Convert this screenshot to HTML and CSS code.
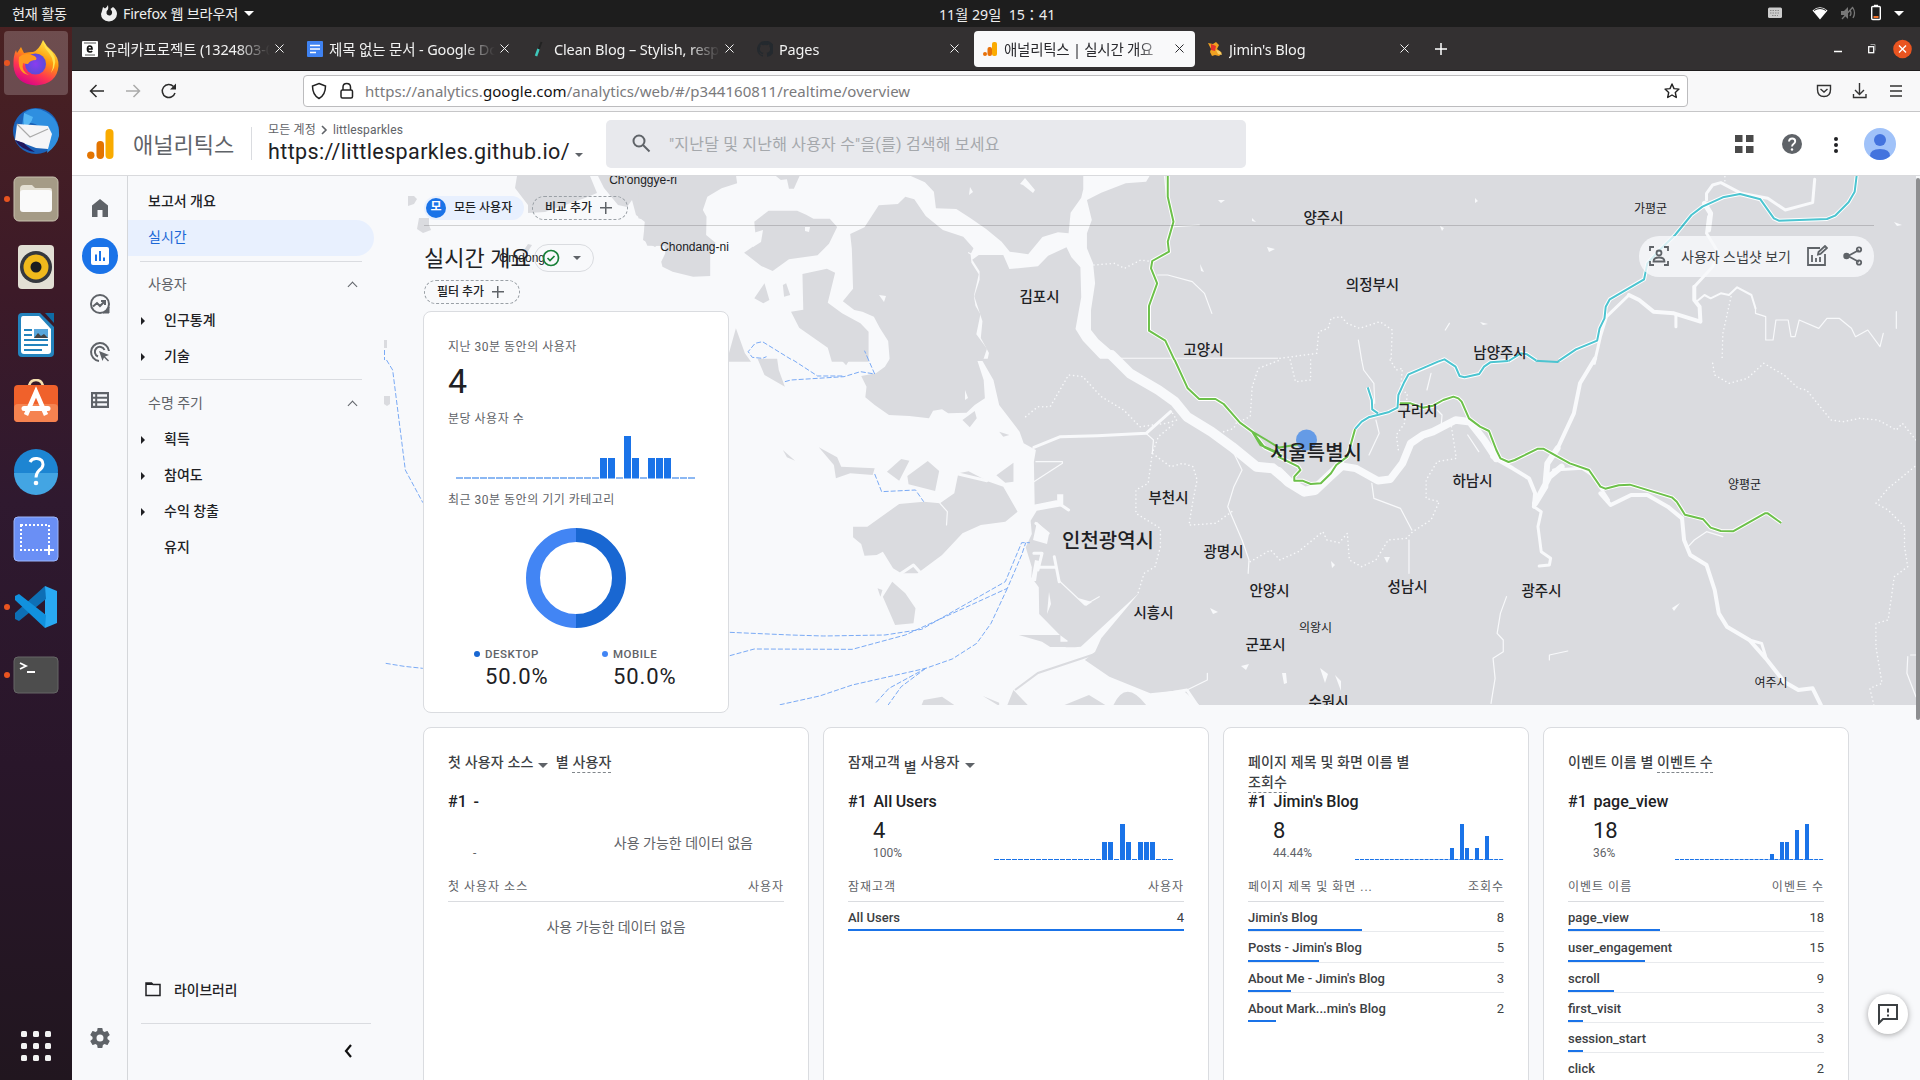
FILE: index.html
```html
<!DOCTYPE html>
<html lang="ko">
<head>
<meta charset="utf-8">
<title>애널리틱스 | 실시간 개요</title>
<link rel="stylesheet" href="styles.css">
</head>
<body>
<div class="topbar">
  <span class="tb-act">현재 활동</span>
  <svg class="tb-fx" width="16" height="18" viewBox="0 0 16 18"><path d="M1 7l1-4 2 1.500Q6 3 7 1q.5 3 0 4.500Q5 7 5.500 9.500 6.500 12 9 11.500 11.500 10.500 11 7.500L9.500 5 12 3q4 3 4 7-.5 6.500-8 7.500Q0 16.500 0 10z" fill="#eee"/></svg>
  <span>Firefox 웹 브라우저</span>
  <i class="tri white"></i>
  <span class="clock">11월 29일&nbsp; 15：41</span>
  <svg class="tb-sys" width="150" height="27" viewBox="1765 0 150 27">
    <rect x="1769" y="7.500" width="14" height="10.500" rx="1.500" fill="#ccc"/><path d="M1771 10.500h10M1771 13h10M1773 15.500h6" stroke="#888" stroke-dasharray="1.500 1"/>
    <path d="M1813.500 10.500q7.500-6.500 15 0L1821 19.500z" fill="#fff"/><path d="M1815 10.500q6-4 12 0" fill="none" stroke="#1d1d1d"/>
    <path d="M1842 11h3l4-4v12l-4-4h-3z" fill="#777"/><path d="M1851 10q2 3 0 6M1854 8q3 5 0 10M1843 19l11-12" fill="none" stroke="#777" stroke-width="1.300"/>
    <rect x="1872.700" y="6.500" width="8.600" height="13" rx="1" fill="none" stroke="#fff" stroke-width="1.400"/><path d="M1875 5.500h4" stroke="#fff" stroke-width="1.500"/><path d="M1874.500 16h5v2h-5z" fill="#f37329"/>
    <path d="M1895 11h10l-5 5z" fill="#fff"/>
  </svg>
</div>
<div class="desk">
  <aside class="dock">
    <div class="app on run"><svg width="48" height="48" viewBox="0 0 48 48"><defs><linearGradient id="ff" x1=".8" y1="0" x2=".3" y2="1"><stop offset="0" stop-color="#fff44f"/><stop offset=".4" stop-color="#ff980e"/><stop offset=".7" stop-color="#ff3750"/><stop offset="1" stop-color="#d6008b"/></linearGradient><radialGradient id="fp"><stop offset="0" stop-color="#8a3cf0"/><stop offset="1" stop-color="#5b4bd8"/></radialGradient></defs><path d="M31 1q3 6 8 10 8 7 7.500 16Q45 45 24 46.500 3 45 1.500 27 1 17 4 11l1 3 4-6 3 6q5-1 9-1 6-2 10-12z" fill="url(#ff)"/><circle cx="23.500" cy="25" r="10.500" fill="url(#fp)"/><path d="M7 18q5-5 13-2 6 2 4 5-6 0-8 4-3 0-5-1-2 8 6 12Q5 34 7 18z" fill="#ff9a1f"/><path d="M31 2q1 7 6 12 7 9 2 20 8-11 1-21Q34 8 31 2z" fill="#ffe14d"/></svg></div>
    <div class="app"><svg width="48" height="48" viewBox="0 0 48 48"><circle cx="24" cy="24" r="23" fill="#1b62b8"/><path d="M12 6Q22-2 34 5q14 8 13 24-2 10-12 17 3-14-5-24Q20 12 10 18z" fill="#2f8fe0"/><path d="M12 6q-1 7 0 14 7-2 9-10z" fill="#56b6f4"/><path d="M5 17l31 2 4 8-4 15-12-1L3 33z" fill="#f5f5f7"/><path d="M5 17l13 13 18-8" fill="none" stroke="#aaa" stroke-width="1.200"/><path d="M3 33q6 10 20 12-9-6-11-9z" fill="#20165c"/></svg></div>
    <div class="app run"><svg width="48" height="48" viewBox="0 0 48 48"><rect x="2" y="2" width="44" height="44" rx="5" fill="#a59b86" stroke="#c7c0ae"/><path d="M8 14q0-4 4-4h8l3 3h15q2 0 2 3v10H8z" fill="#e4dfd3"/><rect x="8" y="15" width="32" height="22" rx="3" fill="#fafafa"/></svg></div>
    <div class="app"><svg width="48" height="48" viewBox="0 0 48 48"><rect x="6" y="2" width="36" height="44" rx="4" fill="#e2dfd4"/><circle cx="24" cy="24" r="16" fill="#35383e"/><circle cx="24" cy="24" r="12.500" fill="#f0b91c"/><circle cx="24" cy="24" r="5.500" fill="#1c1d20"/></svg></div>
    <div class="app"><svg width="48" height="48" viewBox="0 0 48 48"><path d="M10 2h18l14 14v26q0 4-4 4H10q-4 0-4-4V6q0-4 4-4z" fill="#2383bd"/><path d="M11 5h16l12 13v22q0 3-3 3H12q-3 0-3-3V8q0-3 2-3z" fill="#fff"/><path d="M33 2h9v10z" fill="#0e6ba5"/><path d="M12 19h8M12 24h8M12 29h24M12 34h24M12 39h18" stroke="#2383bd" stroke-width="2"/><path d="M22 18h14v9H22z" fill="#59a7dc"/><path d="M22 27l4-5 3 3 3-2 4 4z" fill="#444"/></svg></div>
    <div class="app"><svg width="48" height="48" viewBox="0 0 48 48"><path d="M17 9q0-8 7-8t7 8" fill="none" stroke="#f5e1b0" stroke-width="2.500"/><rect x="2" y="6" width="44" height="37" rx="4" fill="#f0612b"/><rect x="2" y="25" width="44" height="18" rx="4" fill="#f58350"/><path d="M14 36l10-23 10 23" fill="none" stroke="#fff" stroke-width="4.500"/><path d="M12 29.500h24" stroke="#fff" stroke-width="5" stroke-linecap="round"/></svg></div>
    <div class="app"><svg width="48" height="48" viewBox="0 0 48 48"><circle cx="24" cy="24" r="22" fill="#1d85d2"/><path d="M2 26h44a22 22 0 0 1-44 0z" fill="#43a5e3"/><path d="M18 15q2-4 7-3.500 6 .5 6 6 0 3-4 6-3 3-3 7" fill="none" stroke="#fff" stroke-width="3"/><circle cx="24" cy="36" r="2.300" fill="#fff"/></svg></div>
    <div class="app"><svg width="48" height="48" viewBox="0 0 48 48"><rect x="2" y="2" width="44" height="44" rx="4" fill="#6a8ff5" stroke="#9db6fb"/><rect x="9" y="10" width="28" height="25" fill="none" stroke="#fff" stroke-width="2" stroke-dasharray="2 2"/><path d="M37 30v10M32 35h10" stroke="#fff" stroke-width="2"/></svg></div>
    <div class="app run"><svg width="48" height="48" viewBox="0 0 48 48"><path d="M33 3l12 5v32l-12 5z" fill="#29a9f2"/><path d="M33 3L3 30v6l4 2 27-22z" fill="#0e6fb5"/><path d="M33 45L3 17v-4l4-2 27 21z" fill="#1191dd"/></svg></div>
    <div class="app run"><svg width="48" height="48" viewBox="0 0 48 48"><rect x="2" y="6" width="44" height="36" rx="4" fill="#4d4d4d" stroke="#666"/><path d="M8 12l6 3-6 3M15 21h8" fill="none" stroke="#fff" stroke-width="1.800"/></svg></div>
    <svg class="grid9" width="32" height="32" viewBox="0 0 32 32" fill="#f2f2f2"><rect x="1" y="1" width="6" height="6" rx="1.500"/><rect x="13" y="1" width="6" height="6" rx="1.500"/><rect x="25" y="1" width="6" height="6" rx="1.500"/><rect x="1" y="13" width="6" height="6" rx="1.500"/><rect x="13" y="13" width="6" height="6" rx="1.500"/><rect x="25" y="13" width="6" height="6" rx="1.500"/><rect x="1" y="25" width="6" height="6" rx="1.500"/><rect x="13" y="25" width="6" height="6" rx="1.500"/><rect x="25" y="25" width="6" height="6" rx="1.500"/></svg>
  </aside>
  <div class="window">
    <div class="tabs">
      <div class="tab"><svg width="16" height="16" viewBox="0 0 16 16"><rect width="16" height="16" rx="1" fill="#fff"/><path d="M2 2h12M3 14h10" stroke="#555"/><path d="M5.500 8H10Q10 5 7.800 5 5.500 5 5.500 8t2.500 3q1.500 0 2-1" fill="none" stroke="#111" stroke-width="1.700"/></svg><span class="fade">유레카프로젝트 (1324803-0</span><svg class="x" width="9" height="9" viewBox="0 0 9 9"><path d="M.5.500l8 8M8.500.500l-8 8" stroke="currentColor"/></svg></div>
      <div class="tab"><svg width="16" height="16" viewBox="0 0 16 16"><rect width="16" height="16" rx="1" fill="#3f82f1"/><path d="M3 4.500h10M3 8h10M3 11.500h6" stroke="#fff" stroke-width="1.500"/></svg><span class="fade">제목 없는 문서 - Google Docs</span><svg class="x" width="9" height="9" viewBox="0 0 9 9"><path d="M.5.500l8 8M8.500.500l-8 8" stroke="currentColor"/></svg></div>
      <div class="tab"><svg width="16" height="16" viewBox="0 0 16 16"><path d="M9.500 1L6.500 9" stroke="#222" stroke-width="2"/><path d="M6.500 8L4 15" stroke="#3fc8bb" stroke-width="2.500"/></svg><span class="fade">Clean Blog – Stylish, respo</span><svg class="x" width="9" height="9" viewBox="0 0 9 9"><path d="M.5.500l8 8M8.500.500l-8 8" stroke="currentColor"/></svg></div>
      <div class="tab"><svg width="16" height="16" viewBox="0 0 16 16"><path fill="#24292e" d="M8 0a8 8 0 0 0-2.500 15.600c.4.100.5-.2.500-.4v-1.500C3.800 14.200 3.300 13 3.300 13c-.4-.9-.9-1.200-.9-1.200-.7-.5.100-.5.100-.5.800.1 1.200.8 1.200.8.700 1.200 1.900.9 2.300.7.100-.5.300-.9.500-1.100-1.800-.2-3.600-.9-3.600-4 0-.9.300-1.600.8-2.100 0-.2-.4-1 .1-2.100 0 0 .7-.2 2.200.8a7.600 7.600 0 0 1 4 0c1.500-1 2.200-.8 2.200-.8.500 1.100.1 1.900.1 2.100.5.500.8 1.200.8 2.100 0 3.100-1.900 3.800-3.600 4 .3.200.5.700.5 1.500v2.200c0 .2.100.5.600.4A8 8 0 0 0 8 0z"/></svg><span class="fade">Pages</span><svg class="x" width="9" height="9" viewBox="0 0 9 9"><path d="M.5.500l8 8M8.500.500l-8 8" stroke="currentColor"/></svg></div>
      <div class="tab active"><svg width="16" height="16" viewBox="0 0 16 16"><rect x="10" y="1" width="5" height="14" rx="2" fill="#fbab00"/><rect x="5.500" y="6" width="4.500" height="9" rx="2" fill="#e8710a"/><circle cx="3" cy="13" r="2" fill="#e8710a"/></svg><span class="fade">애널리틱스 | 실시간 개요</span><svg class="x" width="9" height="9" viewBox="0 0 9 9"><path d="M.5.500l8 8M8.500.500l-8 8" stroke="currentColor"/></svg></div>
      <div class="tab"><svg width="16" height="16" viewBox="0 0 16 16"><path d="M1 2l5 1 3-2 3 3-2 4 5 4-3 3-4-1-3 1-2-4 1-3z" fill="#f0a020"/><path d="M4 3l5 2-1 5-4-1z" fill="#e3342c"/><path d="M9 9l4 1 2 4-4-1z" fill="#f7cf6a"/></svg><span class="fade">Jimin's Blog</span><svg class="x" width="9" height="9" viewBox="0 0 9 9"><path d="M.5.500l8 8M8.500.500l-8 8" stroke="currentColor"/></svg></div>
      <svg class="plus" width="14" height="14" viewBox="0 0 14 14"><path d="M7 1v12M1 7h12" stroke="#fff" stroke-width="1.500"/></svg>
      <svg class="wm" width="80" height="24" viewBox="0 0 80 24"><path d="M1 14.500h8" stroke="#fff" stroke-width="1.500"/><rect x="35.700" y="9.700" width="5" height="6" fill="none" stroke="#fff" stroke-width="1.300"/><path d="M37.500 7.500h4.500v6" fill="none" stroke="#999"/><circle cx="69.500" cy="12" r="9.300" fill="#e95420"/><path d="M66 8.500l7 7M73 8.500l-7 7" stroke="#fff" stroke-width="1.400"/></svg>
    </div>
    <div class="toolbar">
      <svg class="tnav" width="90" height="20" viewBox="0 0 90 20" fill="none" stroke-width="1.500"><path d="M15 10H1.500M7.500 4L1.500 10l6 6" stroke="#2b2b2b"/><path d="M37 10h13.500M44.500 4l6 6-6 6" stroke="#aaa"/><path d="M86 12A6.500 6.500 0 1 1 84.500 5.500" stroke="#2b2b2b"/><path d="M87 2.500v6h-6z" fill="#2b2b2b"/></svg>
      <div class="url">
        <svg width="45" height="18" viewBox="0 0 45 18" fill="none" stroke="#222" stroke-width="1.500"><path d="M8 1.500L14.500 4q0 9-6.500 12.500Q1.500 13 1.500 4z"/><rect x="30" y="8" width="11.500" height="8" rx="1.500"/><path d="M32 8V5q0-3.500 3.700-3.500T39.500 5v3"/></svg>
        <span>https://analytics.<em>google.com</em>/analytics/web/#/p344160811/realtime/overview</span>
        <svg class="star" width="16" height="16" viewBox="0 0 16 16"><path d="M8 1l2 4.600 5 .5-3.700 3.400 1 5L8 12l-4.300 2.500 1-5L1 6.100l5-.5z" fill="none" stroke="#222" stroke-width="1.400" stroke-linejoin="round"/></svg>
      </div>
      <svg class="tright" width="90" height="20" viewBox="0 0 90 20" fill="none" stroke="#333" stroke-width="1.400"><path d="M1.500 4.500h13v4q0 7-6.500 7t-6.500-7zM4.500 8L8 11l3.500-3M43.500 2v11M39 9l4.500 4.500L48 9M37.500 13v3.500h12.500V13M74 5h12M74 10h12M74 15h12"/></svg>
    </div>
    <header class="ga">
      <svg class="logo" width="27" height="30" viewBox="0 0 27 30"><rect x="18.500" y="0" width="8" height="30" rx="4" fill="#f9ab00"/><rect x="9.500" y="12" width="7.500" height="18" rx="3.700" fill="#e37400"/><circle cx="3.800" cy="26.200" r="3.700" fill="#e37400"/></svg>
      <span class="product">애널리틱스</span>
      <div class="acct"><div class="crumb">모든 계정 <svg width="7" height="10" viewBox="0 0 7 10"><path d="M1 1l4 4-4 4" fill="none" stroke="#5f6368" stroke-width="1.600"/></svg> littlesparkles</div><div class="prop">https://littlesparkles.github.io/<i class="tri"></i></div></div>
      <div class="search"><svg width="20" height="20" viewBox="0 0 20 20" fill="none" stroke="#5f6368" stroke-width="2"><circle cx="8" cy="8" r="5.500"/><path d="M12 12l6.500 6.500"/></svg><span>"지난달 및 지난해 사용자 수"을(를) 검색해 보세요</span></div>
      <svg class="hicons" width="164" height="34" viewBox="0 0 164 34"><path d="M3 8h7.500v7H3zM14 8h7.500v7H14zM3 19h7.500v7H3zM14 19h7.500v7H14z" fill="#4a4a4a"/><circle cx="60" cy="17" r="10" fill="#5f6368"/><path d="M57 14.500q.2-3 3.200-3t3 2.700q0 1.500-1.500 2.500T60 19.500" fill="none" stroke="#fff" stroke-width="1.900"/><circle cx="60" cy="22.500" r="1.200" fill="#fff"/><g fill="#202124"><circle cx="104" cy="12" r="2"/><circle cx="104" cy="18" r="2"/><circle cx="104" cy="24" r="2"/></g><circle cx="148" cy="17" r="16" fill="#a0c2f9"/><circle cx="148" cy="13" r="6" fill="#4373de"/><path d="M138 29q0-7 10-7t10 7q-4 4-10 4t-10-4z" fill="#4373de"/></svg>
    </header>
    <div class="body">
      <nav class="rail">
        <svg width="24" height="24" viewBox="0 0 24 24"><path d="M4 21V9.500L12 3l8 6.500V21h-5.500v-7h-5v7z" fill="#5f6368"/></svg>
        <span class="sel"><svg width="18" height="18" viewBox="0 0 18 18"><rect width="18" height="18" rx="2" fill="#fff"/><path d="M5 7.500V14M9 4v10M13 10.500V14" stroke="#1a73e8" stroke-width="2"/></svg></span>
        <svg width="24" height="24" viewBox="0 0 24 24" fill="none" stroke="#5f6368" stroke-width="2"><circle cx="12" cy="12" r="9"/><path d="M5 14.500l4-3.500 3 3 5-5M13 9h4v4"/><path d="M21 15v6h-6q4-2 6-6z" fill="#5f6368" stroke-width="1"/></svg>
        <svg width="24" height="24" viewBox="0 0 24 24" fill="none" stroke="#5f6368" stroke-width="2"><path d="M11 21A9 9 0 1 1 21 11"/><path d="M10 16.500A5 5 0 1 1 16.500 10"/><path d="M11 11l10 4-4 1.500 4 4-1 1-4-4-1.500 3.500z" fill="#5f6368" stroke="none"/></svg>
        <svg width="24" height="24" viewBox="0 0 24 24"><path d="M3 4h18v16H3z" fill="#5f6368"/><path d="M5 6.200h2.200v2.500H5zM9.200 6.200H19v2.500H9.200zM5 10.700h2.200v2.500H5zM9.200 10.700H19v2.500H9.200zM5 15.200h2.200v2.500H5zM9.200 15.200H19v2.500H9.200z" fill="#f8f9fb"/></svg>
        <svg class="gear" width="24" height="24" viewBox="0 0 24 24"><path fill="#5f6368" d="M19.430 12.980c.04-.32.07-.64.07-.98s-.03-.66-.07-.98l2.110-1.650c.19-.15.24-.42.12-.64l-2-3.460c-.12-.22-.39-.3-.61-.22l-2.490 1c-.52-.4-1.080-.73-1.690-.98l-.38-2.650A.49.490 0 0 0 14 2h-4c-.25 0-.46.18-.49.420l-.38 2.650c-.61.250-1.170.590-1.690.980l-2.490-1c-.23-.09-.49 0-.61.220l-2 3.460c-.13.220-.07.490.12.640l2.110 1.650c-.04.320-.07.650-.07.980s.03.660.07.980l-2.110 1.650c-.19.150-.24.420-.12.640l2 3.460c.12.220.39.300.61.220l2.490-1c.52.400 1.080.730 1.690.980l.38 2.650c.03.240.24.420.49.420h4c.25 0 .46-.18.49-.42l.38-2.650c.61-.25 1.170-.59 1.690-.98l2.490 1c.23.090.49 0 .61-.22l2-3.460c.12-.22.070-.49-.12-.64zM12 15.500a3.500 3.500 0 1 1 0-7 3.500 3.500 0 0 1 0 7z"/></svg>
      </nav>
      <nav class="side">
        <div class="it">보고서 개요</div>
        <div class="it cur">실시간</div>
        <hr>
        <div class="it head">사용자<i class="up"></i></div>
        <div class="it sub"><i class="arr"></i>인구통계</div>
        <div class="it sub"><i class="arr"></i>기술</div>
        <hr class="h2">
        <div class="it head">수명 주기<i class="up"></i></div>
        <div class="it sub"><i class="arr"></i>획득</div>
        <div class="it sub"><i class="arr"></i>참여도</div>
        <div class="it sub"><i class="arr"></i>수익 창출</div>
        <div class="it sub">유지</div>
        <div class="lib"><svg width="16" height="16" viewBox="0 0 16 16"><path d="M1 2h5.500L8 3.500h7v11H1z" fill="none" stroke="#202124" stroke-width="1.500"/><path d="M1 2h6l1 2H1z" fill="#202124"/></svg>라이브러리</div>
        <div class="fold"><svg width="10" height="16" viewBox="0 0 10 16"><path d="M8 2L3 8l5 6" fill="none" stroke="#111" stroke-width="2.200"/></svg></div>
      </nav>
      <main>
        <svg class="map" width="1532" height="529" viewBox="384 176 1532 529">
          <g fill="#dadbdf">
            <path d="M517 176l-2 12 13 17v8l17-1 40-14 12-5-7-17zM598 176l6 12 14 17 9 2 5-7 4 15 9 7-2 18 12 7 8-6V176zM408 196h6l3 3-3 5-6 2zM419 218h10v7l2 5-8 3-6-4zM528 244l4 1-5 8h-5zM384 340h3v8h-3zM384 396h6v8l-3 2-3-2z"/>
            <g transform="translate(640) scale(.408163 .333333)">
              <path d="M-4 525H235L238 550 200 565 165 590 154 630 163 650 162 705 185 728 172 765V828L130 830 80 815 55 800 52 785 62 760 60 738 18 737 10 715 12 660-4 655zM345 540l15-2 5 28 12 0 15-41H330z"/>
              <path d="M280 665l35-33h50l20 0 22 12 18 12h40l18 25-20 50-28 35-70 12-40 35-28-15-42-40 30-25z"/>
              <path d="M515 702l35-20 35-66 47-4 18-22 22 8 28 50 42 42 50 20 25 35-7 18 2 25 18 35-12 65 4 30 12 25-10 60 26 43-10 37H612l-4-60-20-38-15-35-28-15-20-5-28-26 25-38-3-120z"/>
              <path d="M398 822l60-16 20 12-18 90 35 32 45 30 20 25v90H470l-10-42-70-60-20-48 30-6zM280 895l25-45 12 50-15 10zM350 855l8-5 10 35-15 5zM235 985l22 75 15 25h-60z"/>
              <path d="M658 525l40 22 22 28 5 50 50 2 35 28 38 32 38 38 20 30 45 8 35-52 38-14 26 3 5-62 26-45 5-25V525zM1250 525l-10 20-50 5-60 28-35 22 12 60-12 40 0 45 15 45 5 60-10 80 0 60 18 28 52 55H1575V525z"/>
              <path d="M830 765h60l15 42 70-8 25-32 45-25 12 30 22 30 2 90-14 95 18 35 50 65H850l5-28-20-45 4-50-20-75 13-50 0-25-18-35z"/>
            </g>
            <g transform="translate(640 360) scale(.408163 .333333)">
              <path d="M612-4L600 20 578 40 542 48 555 80 552 112 575 135 610 165 660 168 708 175 718 152 740 148 755 160 800 158 820 135 845 115 842 60 825-4zM836-4l30 64 14 75 50 80 10 35 30 20-5 35 2 130 55-12v-20h15v35l-65 14-15 30 3 40-15 40 15 60-1 30 18 30 1 80 50 62 20 18-5 20H1065L1080 860 1222 700 1130 835l-15 40-25 25 60 50 100 50 80-10 40 45H1575V-4z"/>
              <path d="M522 500l35 0 78-68 60-7 40 5 35-30 10-60 25-6 50 31 35 15 35 75-30 30-60 10-45 25-50 65-60 55-40 0-20-15-25-50-15 10-30 2-8-35-20-20z"/>
              <path d="M438 262l45 30 10 28 82 5-5 20-55-5-35 15-5-40zM605 335l35-38 20 5-25 60zM655 348l50-45 28 30-10 60-65-20zM873 346l42-38 0 57-20 3zM618 665l32 35 25 45-5 45-45 5-30-85zM582 685l12 5-5 20zM790 180l30-27 5 22-17 27zM212-4h8v4zM288-4h48l4 34 15 50-50-35zM490-4h25l-10 20zM928 825h102v20H985zM985 845h85l-5 16h-60zM880 215l25 10-15 5zM690 1035l5-15 45-10 30 25zM840 1008l40 20v10zM900 1035l15-45 35 45zM1040 1035l60-30 40 30zM1160 1035q30-80 80 0zM350 270l30 32-20-10z"/>
            </g>
            <path d="M1278 176h638v529h-638z"/>
          </g>
          <path d="M1098 653l-60 20-23 17" fill="none" stroke="#dadbdf" stroke-width="2"/>
          <g class="water">
            <g transform="translate(640) scale(.408163 .333333)">
              <path class="w1" d="M1268 825h25l60 20 30 35 18 60M1285 528l5 60M1310 680l60-5M820 768l-15-10"/>
              <path class="dot" d="M1112 795l50-5 25 15 40-25 28 5"/>
            </g>
            <g transform="translate(640 360) scale(.408163 .333333)">
              <path class="w10" d="M1155-15L1200 40l70 50 40 35 30 45 60 45 50 45 60 60 40 5 25 25"/>
              <path class="w3" d="M965 262l65-32 90-3 120-7 60-65M1270 1005l70-15 25 45"/>
              <path class="w1" d="M1240 220l18 20-3 40M1455 280l20 50-20 50-15 60 35 100 17 60-2 40M1025 660l65 75 35-25M1340 990l50-30v-20M965 365l70-55v-5h-65"/>
              <path class="w3" d="M1015 590l12 75M975 622h45M960 440l60-15 30 25M970 490l30 30-20 10M965 580l20 0-10 50"/>
              <path class="w1" d="M735 430l18 25-2 40" /><path class="w3" d="M780 342l70 20 40-40M640 640l30-25 15 20"/>
              <path class="dot" d="M945 170l30-30h30l45-95 35 5 45 60 55 40 40 50 65-10 25-10-15-30M1305 195l-35 35-15 50 45 40 30-10 25 10 10 40-10 60-10 75 65-5 40-35M1255 280l-10 90-30 20v70l60 45v55l-13 60-27 20-15 60M1430 215l25-10 5-15 35-20 5-90 15-55 53-25M1495 605l50-35 23 30"/>
            </g>
            <g transform="translate(1280) scale(.408163 .333333)">
              <path class="w3" d="M770 1090l15-80 15-60 55-65"/><path class="w4" d="M855 885l25 15 35 35 50 5 65 25-2-45-13-20v-40"/>
              <path class="w3" d="M1015 860l45-60 15-40-30-60 5-50"/><path class="w5" d="M1050 690l5-50-15-30"/>
              <path class="w3" d="M1045 600v-20l15-25 20-7 50 32 65 15 43 35 67-22 5-70M970 945v35"/>
              <path class="w2" d="M1020 905l20-20 15 10 25-15 20 5 20-23 35 23 10 40"/>
              <path class="w1" d="M1165 925v15l25 10v70h18l7-60h30l7 50h10l10-50 48 25 20-30h30l30 30 10 25 30-20 30 50 8-40M1510 935v50"/>
              <path class="dot" d="M0 1075l90-15 5-65 23-10 7-30 25-5 15 20 30 15 50-20 30 25-3 93M1105 890l-20 110-2 83M1090 530v15"/>
              <path class="w1" d="M192 1020l8 60M405 990l10-20"/>
            </g>
            <g transform="translate(1280 360) scale(.408163 .333333)">
              <path class="w10" d="M-5 335l25 30 40 30 25-5 35-40 28-32"/>
              <path class="w7" d="M148 318l37 7 55 37 30-4 30-48 20-60 30-25 25-10 55-35 35 5 35 55 30 55"/>
              <path class="w4" d="M520 290l50 35 40 30 15 45-3 40M772-5l-37 75-15 90-40 105M785 400l25 35 50-30h40l50 35 35 35"/>
              <path class="w6" d="M680 265l-25 45-5 70-25 50M690 320l-30 30-30 70"/>
              <path class="w3" d="M622 440l18 15-8 45 8 75 23 20-3 20-25 3M670 330l70-5 25 20 40 75M1150 840l30 10 10 40"/>
              <path class="w4" d="M985 475l5 65 15 45 40 30 20 75 10 70 20 40 55 40 40 55 45 70 35 25 35-5 20 50"/>
              <path class="w1" d="M200 0l5 30 25 40 2 60M235 180l8 40-25 65M370 40l-10 50M460 225l27 50M225 370l5 45 65 30 28 65M316 540v100M385 150l12 15-2 30M555 710l-15 50-8 60 15 20v35l-25 20 5 60-10 75M1000 560l15-20 30-25 40 15M1545 885h15M1538 890l-2 50 22 70M660 900v-15l45-12"/>
              <path class="dot" d="M25 0l13 65 37-5V0M270 0l15 30 15-5-5 65 17 10-7 90-20 35 5 45M420 200l12 95-47 10-27 55v55l32 10-20 55-45 35-15 20-45 5-30 60-35 20-30-20-5-80-20 28-30-8-10-25-60 60-45 25M1060 10l5 35 35 25 45-15 40-45 50 35 35 40 20 5 60 90 30 5 40-10 45 5 45 30 15-20 33 50M1555 320l-65 65-30 45 30 20 40 50v60l8 60-33 30-15 130-30 10v70l15 110-30 15 10 50"/>
            </g>
          </g>
          <g fill="#f8f9fb"><path d="M1020 184l5-6 10 12-2 3-10-8zM970 187l3 5-4 3zM1218 200h7l-4 3zM1252 218l4 4-4-1zM1267 247l8 2-6 3zM1200 264l4 8-3-1zM879 295l7 1-2 6zM750 234l13-4-2 12-8 5zM805 227l5 0-1 5-4-1zM1331 561l4 4-3 3zM1384 557l6 0-3 6zM1210 608l8 4-5 2zM1241 666l8-2-3 6zM1335 675l6 6v10zM1320 668l8 6-3 9zM1037 522l12 12-2 10-14-4zM1035 560l4 1-3 20h-5zM1049 592l2 12-4 10zM1078 598l14 4-6 4zM965 390l3 8-3 2z"/><path d="M1282 673l4 0 1 10-3 1zM1672 608l8-5-6 8zM1440 226l4 2-2 3zM1480 322l8 2-5 1zM1475 198l3 3-3 2zM1894 222l8 3-5 1z"/></g>
          <g class="ferry">
            <path d="M384.500 350v10"/>
            <g transform="translate(0 360) scale(.408163 .333333)"><path d="M947 0l15 30 31 300 43 98M945 910l45 9 46 6"/></g>
            <g transform="translate(640) scale(.408163 .333333)"><path d="M560 1080l-10-28M370 1078l-70-53-18 5-17 25 10 17 25 3 10-5"/></g>
            <g transform="translate(640 360) scale(.408163 .333333)"><path d="M220 817l150 8 80 3 150-3 90-17 205-143 40-117h20M220 887l60-20 240 1 130-43 80-45 170-95 35-100 10-37M900 685l-40 105-35 60-60 47-65 28-180 50-80 33-100 27M700 925l-90 60-35 47M700 925l-60 55-32 55M575 342l17 53 83-5 20 35M355 65l15-5 130-10 40-15 35 7-15-42M375 0l60 48h65"/></g>
          </g>
          <g class="rail-lines">
            <g transform="translate(640) scale(.408163 .333333)"><path class="c" d="M1293 525v65l14 75-14 60 3 30-41 28-3 22 15 45-20 68v74l40 30 25 65"/><path class="gr" d="M1293 525v65l14 75-14 60 3 30-41 28-3 22 15 45-20 68v74l40 30 25 65"/></g>
            <g transform="translate(640 360) scale(.408163 .333333)"><path class="c" d="M1310 0l32 85 28 32h40l20 15 40 56 30 27 30 47 42 25"/><path class="gr" d="M1310 0l32 85 28 32h40l20 15 40 56 30 27 30 47 42 25M1500 215l35 25 33 25M1500 215l20 40 48 25"/></g>
            <g transform="translate(1280 360) scale(.408163 .333333)">
              <path class="c" d="M-5 290l50 30 5 10-15 20v12h20l20 10 25-2 25-30 13-25 27-25 8-35 11-48M290 130h30l30 13 25-6 25-17 25-10 12 5 8 10 18 50 27 25 22 13 18 57 10 25 20 11 15-6 57-34h13l65 44 47 20 28 50 12 6 33-10 27-2 103 38 12 13 20 39 45 14 18 25 25 10 30 1 78-54h7l33 29"/>
              <path class="gr" d="M-5 290l50 30 5 10-15 20v12h20l20 10 25-2 25-30 13-25 27-25 8-35 11-48M-5 263l45-9h20M290 130h30l30 13 25-6 25-17 25-10 12 5 8 10 18 50 27 25 22 13 18 57 10 25 20 11 15-6 57-34h13l65 44 47 20 28 50 12 6 33-10 27-2 103 38 12 13 20 39 45 14 18 25 25 10 30 1 78-54h7l33 29"/>
              <path class="c" d="M184 207l16-22 17-13 48-15 23-14 2-38 13-35 12-27 88-45 27 22 10 28 12 4 36-10 12-22 15-13 45-4M215 82l10 38 1 28 14 12"/>
              <path class="te" d="M184 207l16-22 17-13 48-15 23-14 2-38 13-35 12-27 72-38 16-7 27 22 10 28 12 4 36-10 12-22 15-13 45-4M215 82l10 38 1 28 14 12"/>
              <path class="te" d="M625 2l55 4 8-8"/>
            </g>
            <g transform="translate(1280) scale(.408163 .333333)"><path class="c" d="M560 1083l30-23 15 3 23 19M684 1082l41-34 52-26 6-37 12-30 3-35 10-22 84-60 8-48 30-40 38-45 40-60 27-25 50-28 42-10 50 16 33 57 12 7 118-5 20-10 33-40 15-32 5-50"/><path class="te" d="M560 1083l30-23 15 3 23 19M684 1082l41-34 52-26 6-37 12-30 3-35 10-22 84-60 8-48 30-40 38-45 40-60 27-25 50-28 42-10 50 16 33 57 12 7 118-5 20-10 33-40 15-32 5-50"/></g>
          </g>
          <circle cx="1306.500" cy="440" r="10.500" fill="#5b96e6" fill-opacity=".93"/>
          <g class="city">
            <text x="1323.500" y="223">양주시</text><text x="1372.500" y="290">의정부시</text><text x="1039.500" y="302">김포시</text><text x="1203.500" y="355">고양시</text><text x="1500" y="358">남양주시</text><text x="1417.500" y="416">구리시</text><text x="1472.500" y="486">하남시</text><text x="1168.500" y="503">부천시</text><text x="1223.500" y="557">광명시</text><text x="1269.500" y="596">안양시</text><text x="1407.500" y="592">성남시</text><text x="1541.500" y="596">광주시</text><text x="1153.500" y="618">시흥시</text><text x="1265.500" y="650">군포시</text><text x="1328.500" y="707">수원시</text>
            <text class="big" x="1316" y="460">서울특별시</text><text class="big" x="1108" y="548">인천광역시</text>
            <text class="sm" x="1650.500" y="213">가평군</text><text class="sm" x="1744.500" y="489">양평군</text><text class="sm" x="1315.500" y="632">의왕시</text><text class="sm" x="1771" y="687">여주시</text>
            <text class="en" x="643" y="184">Ch'onggye-ri</text><text class="en" x="694.500" y="251">Chondang-ni</text><text class="en" x="522" y="262">Omdong</text>
          </g>
        </svg>
        <div class="content">
          <div class="chips"><span class="chip all"><b>모</b>모든 사용자</span><span class="chip dash">비교 추가<i class="pl"></i></span></div>
          <div class="titlerow"><h1>실시간 개요</h1><span class="status"><svg width="18" height="18" viewBox="0 0 18 18" fill="none" stroke="#188038" stroke-width="1.700"><circle cx="9" cy="9" r="7.500"/><path d="M5.500 9l2.500 2.500 4.500-4.500"/></svg><i class="tri"></i></span>
            <div class="snap"><svg width="20" height="20" viewBox="0 0 20 20" fill="none" stroke="#5f6368" stroke-width="1.800"><path d="M1 5V1h4M15 1h4v4M19 15v4h-4M5 19H1v-4"/><circle cx="10" cy="7" r="2.500"/><path d="M4.500 15.500q0-4 5.500-4t5.500 4z"/></svg><span>사용자 스냅샷 보기</span><svg width="22" height="22" viewBox="0 0 22 22" fill="none" stroke="#5f6368" stroke-width="1.800"><path d="M14 3H2v17h17V9M6 10v7M10 13v4M14 12v5M12 9.500l.5-2.500L19 1l2 2-6.500 6z"/></svg><svg width="20" height="20" viewBox="0 0 20 20" fill="none" stroke="#5f6368" stroke-width="1.800"><path d="M5 10l11-6M5 10l11 6"/><circle cx="3.500" cy="10" r="2.300" fill="#5f6368"/><circle cx="16" cy="3.500" r="2.200"/><circle cx="16" cy="16.500" r="2.200"/></svg></div>
          </div>
          <div class="filter"><span class="chip dash">필터 추가<i class="pl"></i></span></div>
          <section class="card now">
            <h3>지난 30분 동안의 사용자</h3>
            <div class="num">4</div>
            <h3>분당 사용자 수</h3>
            <svg class="mini" width="240" height="43" viewBox="0 0 240 43"><path d="M0 42h240" stroke="#1a73e8" stroke-width="1.200" stroke-dasharray="7 1"/><path fill="#1a73e8" d="M144 22h7v20h-7zM152 22h7v20h-7zM168 0h7v42h-7zM176 22h7v20h-7zM192 22h7v20h-7zM200 22h7v20h-7zM208 22h7v20h-7z"/></svg>
            <h3>최근 30분 동안의 기기 카테고리</h3>
            <svg class="donut" width="100" height="100" viewBox="0 0 100 100" fill="none" stroke-width="14"><path d="M50 7a43 43 0 0 1 0 86" stroke="#1967d2"/><path d="M50 93a43 43 0 0 1 0-86" stroke="#4285f4"/></svg>
            <div class="legend"><div><span class="a">DESKTOP</span><b>50.0%</b></div><div><span class="b">MOBILE</span><b>50.0%</b></div></div>
          </section>
          <div class="cards">
            <section class="card">
              <h2>첫 사용자 소스<i class="tri lo"></i>&nbsp; 별 <u>사용자</u></h2>
              <div class="top1">#1&nbsp; -</div>
              <div class="stat"><div><b>&nbsp;</b><small>-</small></div><span class="nodata">사용 가능한 데이터 없음</span></div>
              <div class="th"><span>첫 사용자 소스</span><span>사용자</span></div>
              <div class="none">사용 가능한 데이터 없음</div>
            </section>
            <section class="card">
              <h2>잠재고객 <s>별</s> 사용자<i class="tri lo"></i></h2>
              <div class="top1">#1&nbsp; All Users</div>
              <div class="stat"><div><b>4</b><small>100%</small></div><svg class="sp2" width="179" height="36" viewBox="0 0 179 36"><path d="M0 35.500h179" stroke="#1a73e8" stroke-dasharray="5 1"/><path fill="#1a73e8" d="M108 18h5v18h-5zM114 18h5v18h-5zM126 0h5v36h-5zM132 18h5v18h-5zM144 18h5v18h-5zM150 18h5v18h-5zM156 18h5v18h-5z"/></svg></div>
              <div class="th"><span>잠재고객</span><span>사용자</span></div>
              <div class="tr last"><span>All Users</span><span>4</span><i style="width:100%"></i></div>
            </section>
            <section class="card">
              <h2>페이지 제목 및 화면 이름 별<br><u>조회수</u></h2>
              <div class="top1">#1&nbsp; Jimin's Blog</div>
              <div class="stat"><div><b>8</b><small>44.44%</small></div><svg width="149" height="36" viewBox="0 0 149 36"><path d="M0 35.500h149" stroke="#1a73e8" stroke-dasharray="4 .97"/><path fill="#1a73e8" d="M95 24h4v12h-4zM105 0h4v36h-4zM110 24h4v12h-4zM120 24h4v12h-4zM130 12h4v24h-4z"/></svg></div>
              <div class="th"><span>페이지 제목 및 화면 ...</span><span>조회수</span></div>
              <div class="tr"><span>Jimin's Blog</span><span>8</span><i style="width:44.440%"></i></div>
              <div class="tr"><span>Posts - Jimin's Blog</span><span>5</span><i style="width:27.780%"></i></div>
              <div class="tr"><span>About Me - Jimin's Blog</span><span>3</span><i style="width:16.670%"></i></div>
              <div class="tr last"><span>About Mark...min's Blog</span><span>2</span><i style="width:11.110%"></i></div>
            </section>
            <section class="card">
              <h2>이벤트 이름 별 <u>이벤트 수</u></h2>
              <div class="top1">#1&nbsp; page_view</div>
              <div class="stat"><div><b>18</b><small>36%</small></div><svg width="149" height="36" viewBox="0 0 149 36"><path d="M0 35.500h149" stroke="#1a73e8" stroke-dasharray="4 .97"/><path fill="#1a73e8" d="M95 30h4v6h-4zM105 18h4v18h-4zM110 18h4v18h-4zM120 6h4v30h-4zM130 0h4v36h-4z"/></svg></div>
              <div class="th"><span>이벤트 이름</span><span>이벤트 수</span></div>
              <div class="tr"><span>page_view</span><span>18</span><i style="width:36%"></i></div>
              <div class="tr"><span>user_engagement</span><span>15</span><i style="width:30%"></i></div>
              <div class="tr"><span>scroll</span><span>9</span><i style="width:18%"></i></div>
              <div class="tr"><span>first_visit</span><span>3</span><i style="width:6%"></i></div>
              <div class="tr"><span>session_start</span><span>3</span><i style="width:6%"></i></div>
              <div class="tr"><span>click</span><span>2</span><i style="width:4%"></i></div>
            </section>
          </div>
        </div>
        <div class="scroll"></div>
        <div class="fab"><svg width="22" height="22" viewBox="0 0 22 22"><path d="M2 20V2h18v14H6z" fill="none" stroke="#3c4043" stroke-width="2"/><path d="M11 5.500v4M11 11.500v2" stroke="#3c4043" stroke-width="2"/></svg></div>
      </main>
    </div>
  </div>
</div>
</body>
</html>
```
FILE: styles.css
```css
* { box-sizing: border-box; }
body { margin: 0; width: 1920px; height: 1080px; overflow: hidden; font-family: Roboto, "Noto Sans CJK KR", sans-serif; color: #202124; font-size: 14px; }
svg { display: block; flex: none; }
i, em { font-style: normal; }
h1, h2, h3 { margin: 0; font-weight: 400; }

.tri { display: inline-block; border: 5px solid transparent; border-top-color: #5f6368; border-bottom: 0; }
.tri.white { border-top-color: #fff; margin-left: 6px; }

.topbar { height: 27px; background: #1d1d1d; color: #eee; display: flex; align-items: center; font: 14.200px/27px "Noto Sans", "Noto Sans CJK KR", sans-serif; padding-left: 12px; position: relative; white-space: nowrap; letter-spacing: -.2px; }
.tb-act { width: 89px; }
.tb-fx { margin-right: 6px; margin-top: -2px; }
.clock { position: absolute; left: 939px; top: 1px; letter-spacing: 0; }
.tb-sys { margin-left: auto; margin-right: 6px; }

.desk { display: flex; height: 1053px; }
.dock { width: 72px; background: linear-gradient(#4a2122, #3c1a28 25%, #2f192f 45%, #29162a 70%, #21161f); display: flex; flex-direction: column; align-items: center; padding-top: 4px; gap: 4px; }
.app { width: 64px; height: 64px; border-radius: 4px; display: flex; align-items: center; justify-content: center; position: relative; }
.app.on { background: rgba(255,255,255,.2); }
.app.run::before { content: ""; position: absolute; left: 0; top: 29px; width: 6px; height: 6px; border-radius: 50%; background: #e95420; }
.grid9 { margin-top: auto; margin-bottom: 18px; }

.window { width: 1848px; display: flex; flex-direction: column; background: #fff; }
.tabs { height: 44px; background: #333031; display: flex; align-items: center; padding: 0 12px 0 2px; gap: 4px; border-bottom: 1px solid #1e1c1d; font: 14.500px/20px "Noto Sans", "Noto Sans CJK KR", sans-serif; color: #f2f2f2; letter-spacing: -.15px; }
.tab { width: 221px; height: 36px; margin-top: 0; border-radius: 4px; padding: 0 11px 0 8px; display: flex; align-items: center; }
.tab.active { background: #f9f9fa; color: #2a2a2e; }
.fade { margin-left: 6px; width: 172px; overflow: hidden; white-space: nowrap; -webkit-mask-image: linear-gradient(90deg, #000 78%, transparent 97%); mask-image: linear-gradient(90deg, #000 78%, transparent 97%); padding-top: 1px; }
.active .fade { letter-spacing: -.25px; }
.plus { margin-left: 10px; }
.wm { margin-left: auto; margin-right: -5px; }

.toolbar { height: 41px; background: #f8f8f9; border-bottom: 1px solid #c6c6c8; display: flex; align-items: center; padding: 0 14px 0 17px; }
.url { margin-left: 124px; width: 1386px; height: 32px; border: 1px solid #bcbcbe; border-radius: 4px; background: #fff; display: flex; align-items: center; padding: 0 7px 0 7px; font: 15px/20px "Noto Sans", sans-serif; color: #7a7a7c; letter-spacing: .05px; }
.url span { margin-left: 9px; }
.url em { color: #111; }
.star { margin-left: auto; }
.tright { margin-left: 128px; }

.ga { height: 64px; border-bottom: 1px solid #d9dadd; display: flex; align-items: center; padding-left: 15px; }
.product { margin-left: 19px; width: 119px; height: 33px; border-right: 1px solid #dadce0; font-size: 22px; line-height: 37px; color: #5f6368; white-space: nowrap; }
.acct { margin-left: 16px; width: 338px; }
.crumb { font-size: 12px; line-height: 16px; color: #5f6368; display: flex; align-items: center; gap: 5px; letter-spacing: .15px; }
.prop { font-size: 21.500px; line-height: 28px; letter-spacing: .38px; white-space: nowrap; }
.prop .tri { margin-left: 5px; vertical-align: 2px; border-width: 4.500px; border-bottom: 0; }
.search { width: 640px; height: 48px; border-radius: 5px; background: #e8e9ed; display: flex; align-items: center; padding: 0 0 1px 25px; gap: 18px; font-size: 16px; letter-spacing: .2px; color: #a5a8ac; }
.hicons { margin-left: 486px; }

.body { display: flex; height: 904px; background: #f8f9fb; }
.rail { width: 56px; border-right: 1px solid #d5d7da; display: flex; flex-direction: column; align-items: center; padding: 20px 0 30px; gap: 24px; }
.sel { width: 36px; height: 36px; margin: -6px 0; border-radius: 50%; background: #1a73e8; display: flex; align-items: center; justify-content: center; }
.gear { margin-top: auto; }
.side { width: 256px; font-weight: 500; font-size: 14px; display: flex; flex-direction: column; padding-top: 8px; }
.it { height: 36px; line-height: 35px; padding-left: 20px; display: flex; flex: none; }
.cur { width: 246px; background: #e8f0fe; color: #1a67d6; border-radius: 0 18px 18px 0; font-weight: 400; }
.side hr { margin: 5px 0 5px 12px; width: 222px; border: 0; border-top: 1px solid #dadce0; height: 1px; flex: none; }
.side hr.h2 { margin-top: 4px; margin-bottom: 6px; }
.head { font-weight: 400; color: #5f6368; }
.up { width: 7px; height: 7px; border: solid #5f6368; border-width: 1.500px 0 0 1.500px; transform: rotate(45deg); margin: 16px 0 0 auto; margin-right: 28px; }
.sub { padding-left: 36px; }
.arr { border: 4px solid transparent; border-left-color: #202124; border-right: 0; margin: 14px 19px 0 -23px; height: 0; }
.lib { margin-top: auto; display: flex; gap: 13px; align-items: center; padding-left: 17px; height: 36px; font-size: 13.800px; }
.fold { margin: 16px 0 0 13px; width: 230px; border-top: 1px solid #dadce0; height: 57px; padding: 19px 0 0 202px; }

main { width: 1536px; position: relative; overflow: hidden; }
.map { position: absolute; left: 0; top: 0; }
.map path { vector-effect: non-scaling-stroke; }
.water, .rail-lines, .ferry { fill: none; stroke-linejoin: round; }
.water { stroke: #f8f9fb; stroke-linecap: round; }
.w1 { stroke-width: 1.2px; } .w2 { stroke-width: 2px; } .w3 { stroke-width: 3px; } .w4 { stroke-width: 4px; } .w5 { stroke-width: 5px; }
.w6 { stroke-width: 6px; } .w7 { stroke-width: 7.500px; } .w10 { stroke-width: 10px; }
.dot { stroke-width: 1.500px; stroke-dasharray: .1 4; }
.ferry { stroke: #7aaaf5; stroke-dasharray: 5 2; }
.c { stroke: #fff; stroke-width: 4px; }
.gr { stroke: #6cc04a; stroke-width: 2px; }
.te { stroke: #4cc4d0; stroke-width: 2px; }
.city text { font-size: 14.500px; font-weight: 500; text-anchor: middle; fill: #202124; }
.city .big { font-size: 20px; }
.city .sm { font-size: 12px; font-weight: 400; }
.city .en { font: 12px "Liberation Sans", sans-serif; }
.content { position: relative; padding: 20px 0 0 39px; }
.chips { display: flex; align-items: center; gap: 8px; width: 1450px; height: 30px; margin-left: 1px; padding-bottom: 6px; border-bottom: 1px solid rgba(0,0,0,.16); }
.chip { height: 24px; border-radius: 12px; font-size: 12px; line-height: 22px; font-weight: 500; display: inline-flex; align-items: center; flex: none; }
.chip.all { width: 100px; background: #e8f0fe; padding-left: 2px; gap: 8px; }
.chip b { width: 20px; height: 20px; line-height: 19px; border-radius: 50%; background: #1a73e8; color: #fff; text-align: center; font-size: 12px; }
.dash { width: 96px; border: 1px dashed #9aa0a6; padding-left: 12px; justify-content: flex-start; gap: 8px; }
.pl { width: 12px; height: 12px; background: linear-gradient(#5f6368, #5f6368) center/12px 1.500px no-repeat, linear-gradient(#5f6368, #5f6368) center/1.500px 12px no-repeat; }
.titlerow { display: flex; align-items: center; height: 51px; margin-top: 6px; padding-left: 1px; }
h1 { font-size: 22px; line-height: 30px; width: 110px; white-space: nowrap; padding-top: 2px; }
.status { width: 60px; height: 34px; height: 28px; border: 1px solid #dadce0; border-radius: 14px; display: flex; align-items: center; padding-left: 7px; gap: 13px; margin-top: 0; }
.status .tri { border-width: 4.500px; border-bottom: 0; }
.snap { margin-left: 1045px; width: 235px; height: 41px; border-radius: 20px; background: rgba(248,249,251,.8); display: flex; align-items: center; padding-left: 10px; font-size: 14px; color: #3c4043; white-space: nowrap; margin-top: -3px; }
.snap span { margin: 0 15px 0 12px; }
.snap svg:last-child { margin-left: 15px; }
.filter { height: 34px; margin: -3px 0 0 1px; display: flex; align-items: flex-start; }
.card { background: #fff; border: 1px solid #dadce0; border-radius: 8px; }
.now { width: 306px; height: 402px; padding: 26px 24px 0; margin-top: -3px; }
h3 { font-size: 12px; line-height: 18px; color: #5f6368; letter-spacing: .5px; }
.num { font-size: 34px; line-height: 50px; height: 54px; }
.mini { margin: 8px 0 12px 8px; }
.donut { margin: 19px 0 0 78px; }
.legend { display: flex; padding-left: 37px; margin-top: 17px; }
.legend div { width: 128px; flex: none; }
.legend span { display: block; font-size: 11.500px; font-weight: 500; letter-spacing: .5px; color: #5f6368; line-height: 18px; position: relative; }
.legend span::before { content: ""; position: absolute; left: -11px; top: 6px; width: 6px; height: 6px; border-radius: 50%; background: #1967d2; }
.legend .b::before { background: #4285f4; }
.legend b { font-weight: 400; font-size: 22px; line-height: 28px; letter-spacing: .9px; }
.cards { display: grid; grid-template-columns: 386px 386px 306px 306px; gap: 14px; margin-top: 14px; }
.cards .card { height: 380px; padding: 24px 24px 0; }
h2 { height: 38px; font-size: 14px; line-height: 20px; font-weight: 500; color: #3c4043; white-space: nowrap; letter-spacing: .15px; }
h2 .tri { margin-left: 5px; vertical-align: -1px; }
h2 u { text-decoration: none; display: inline-block; height: 21px; border-bottom: 1px dashed #80868b; }
h2 s { text-decoration: none; position: relative; top: 5px; }
.top1 { font-size: 16px; font-weight: 500; line-height: 24px; word-spacing: -.6px; }
.stat { height: 71px; display: flex; justify-content: space-between; padding-left: 25px; }
.stat b { display: block; font-weight: 400; font-size: 22px; line-height: 30px; margin-top: 2px; }
.stat small { display: block; font-size: 12px; line-height: 16px; margin-top: -1px; color: #5f6368; }
.stat svg { margin-top: 10px; }
.sp2 { margin-right: 11px; }
.nodata { font-size: 14px; line-height: 20px; color: #5f6368; margin: 19px 31px 0 0; }
.th { height: 17px; line-height: 5px; display: flex; justify-content: space-between; font-size: 12px; letter-spacing: 1px; color: #5f6368; border-bottom: 1px solid #dadce0; }
.none { text-align: center; color: #5f6368; line-height: 20px; margin-top: 15px; }
.tr { height: 30.300px; border-bottom: 1px solid #e8eaed; position: relative; display: flex; justify-content: space-between; font-size: 13px; line-height: 32px; font-weight: 500; color: #3c4043; }
.tr span + span { font-weight: 400; }
.tr i { position: absolute; left: 0; bottom: 0; height: 2px; background: #1a73e8; }
.tr.last { border-bottom-color: transparent; }
.scroll { position: absolute; right: 0; top: 2px; width: 4px; height: 542px; background: #8d8e90; border-radius: 2px; }
.fab { position: absolute; left: 1484px; top: 818px; width: 40px; height: 40px; border-radius: 50%; background: #fff; box-shadow: 0 1px 6px rgba(0,0,0,.35); display: flex; align-items: center; justify-content: center; }
```
